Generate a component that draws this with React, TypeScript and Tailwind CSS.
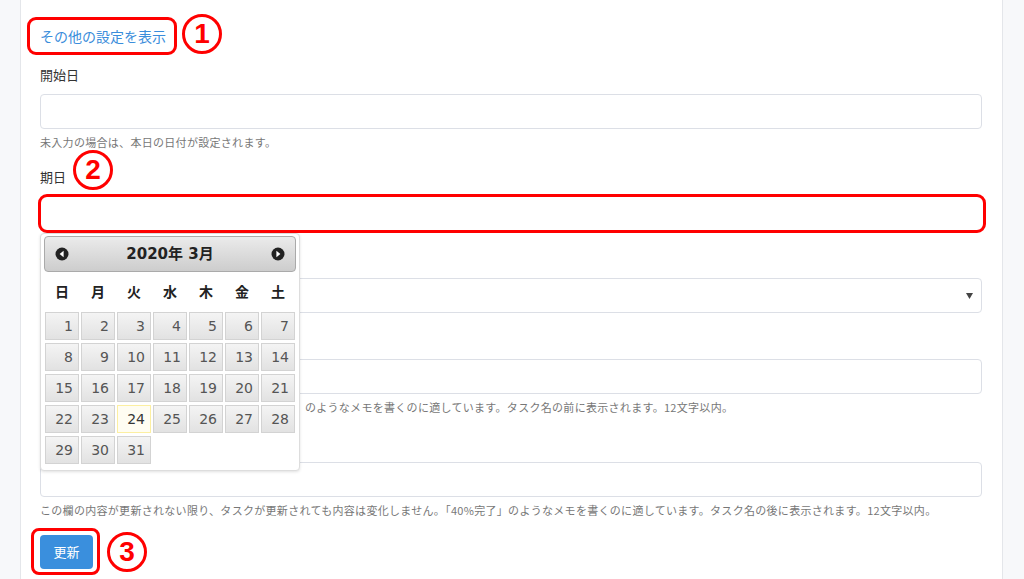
import React from "react";

function Mark({ n, pos }: { n: string; pos: string }) {
  return (
    <span
      className={`absolute flex h-[40px] w-[40px] items-center justify-center rounded-full border-[3.5px] border-[#ff0000] bg-white font-['Liberation_Sans',sans-serif] text-[28px] font-bold leading-none text-[#ff0000] ${pos}`}
    >
      {n}
    </span>
  );
}

function Label({ children }: { children: React.ReactNode }) {
  return <div className="h-[18px] text-[13px] leading-[18px] text-[#333]">{children}</div>;
}

function Help({ children }: { children: React.ReactNode }) {
  return (
    <div className="mt-[5px] h-[16px] whitespace-nowrap text-[11px] leading-[16px] tracking-[0.3px] text-[#777]">
      {children}
    </div>
  );
}

function Input() {
  return <div className="mt-[10px] h-[35px] rounded-[4px] border border-[#dcdfe6] bg-white" />;
}

function Arrow({ dir }: { dir: "l" | "r" }) {
  return (
    <svg width="14" height="14" viewBox="0 0 14 14">
      <circle cx="7" cy="7" r="6.5" fill="#222" />
      {dir === "l" ? (
        <path d="M8.6 3.8 L4.6 7 L8.6 10.2 Z" fill="#fff" />
      ) : (
        <path d="M5.4 3.8 L9.4 7 L5.4 10.2 Z" fill="#fff" />
      )}
    </svg>
  );
}

function Calendar() {
  const names = ["日", "月", "火", "水", "木", "金", "土"];
  const days = Array.from({ length: 31 }, (_, i) => i + 1);
  return (
    <div className="absolute left-0 top-[37px] z-10 h-[238px] w-[260px] rounded-[4px] border border-[#dddddd] bg-white px-[3px] pt-[2px] font-['DejaVu_Sans','Noto_Sans_CJK_JP',sans-serif] shadow-[0_1px_3px_rgba(0,0,0,0.12)]">
      <div className="flex h-[36px] items-center justify-between rounded-[4px] border border-[#aaaaaa] bg-gradient-to-b from-[#ebebeb] to-[#cdcdcd] px-[10px]">
        <Arrow dir="l" />
        <span className="text-[15px] font-bold text-[#222]">2020年 3月</span>
        <Arrow dir="r" />
      </div>
      <div className="grid h-[40px] grid-cols-7 items-center gap-x-[2px] px-[1px]">
        {names.map((d) => (
          <div key={d} className="text-center text-[14px] font-bold text-[#222]">
            {d}
          </div>
        ))}
      </div>
      <div className="grid grid-cols-7 gap-x-[2px] gap-y-[3px] px-[1px]">
        {days.map((d) =>
          d === 24 ? (
            <div
              key={d}
              className="flex h-[28px] items-center justify-end border border-[#fcefa1] bg-[#fffdf2] pr-[5px] text-[14px] text-[#363636]"
            >
              {d}
            </div>
          ) : (
            <div
              key={d}
              className="flex h-[28px] items-center justify-end border border-[#d3d3d3] bg-gradient-to-b from-[#f4f4f4] to-[#e2e2e2] pr-[5px] text-[14px] text-[#555]"
            >
              {d}
            </div>
          )
        )}
      </div>
    </div>
  );
}

export default function App() {
  return (
    <div className="flex h-[579px] w-full overflow-hidden bg-white font-['Noto_Sans_CJK_JP',sans-serif]">
      <div className="w-[21px] shrink-0 border-r border-[#e4e6ea] bg-[#f7f8fa]" />
      <div className="flex-1 pl-[19px] pr-[20px] pt-[27px]">
        <div className="relative flex w-fit text-[14px] leading-[19px] text-[#3a8ddb]">
          <span className="absolute -bottom-[9px] -left-[13px] -right-[11px] -top-[10px] rounded-[9px] border-[3px] border-[#ff0000]" />
          <span>その他の設定を表示</span>
          <Mark n="1" pos="left-[142px] -top-[13px]" />
        </div>

        <div className="mt-[20px]">
          <Label>開始日</Label>
          <Input />
          <Help>未入力の場合は、本日の日付が設定されます。</Help>
        </div>

        <div className="mt-[18px]">
          <div className="relative">
            <Label>期日</Label>
            <Mark n="2" pos="left-[33px] -top-[18px]" />
          </div>
          <div className="relative mt-[10px] h-[35px] rounded-[4px] bg-white">
            <span className="absolute -bottom-[2px] -left-[2px] -right-[4px] -top-[2px] rounded-[9px] border-[3px] border-[#ff0000]" />
            <Calendar />
          </div>
        </div>

        <div className="mt-[19px]">
          <Label>優先度</Label>
          <div className="mt-[10px] flex h-[35px] items-center justify-end rounded-[4px] border border-[#dcdfe6] bg-white pr-[8px]">
            <svg width="7" height="6" viewBox="0 0 7 6">
              <path d="M0 0 H7 L3.5 6 Z" fill="#444" />
            </svg>
          </div>
        </div>

        <div className="mt-[18px]">
          <Label>プレフィックス</Label>
          <Input />
          <Help>タスク名の前に付けるメモです。「重要」「至急」　　のようなメモを書くのに適しています。タスク名の前に表示されます。12文字以内。</Help>
        </div>

        <div className="mt-[19px]">
          <Label>サフィックス</Label>
          <Input />
          <Help>
            この欄の内容が更新されない限り、タスクが更新されても内容は変化しません。「40%完了」のようなメモを書くのに適しています。タスク名の後に表示されます。12文字以内。
          </Help>
        </div>

        <div className="relative mt-[17px] flex w-fit">
          <span className="absolute -bottom-[6px] -left-[9px] -right-[7px] -top-[7px] rounded-[8px] border-[3px] border-[#ff0000]" />
          <button className="relative h-[34px] w-[53px] rounded-[4px] bg-[#3a8fdd] text-[13px] text-white">更新</button>
          <Mark n="3" pos="left-[67px] -top-[3px]" />
        </div>
      </div>
      <div className="w-[22px] shrink-0 border-l border-[#e4e6ea] bg-[#f7f8fa]" />
    </div>
  );
}
